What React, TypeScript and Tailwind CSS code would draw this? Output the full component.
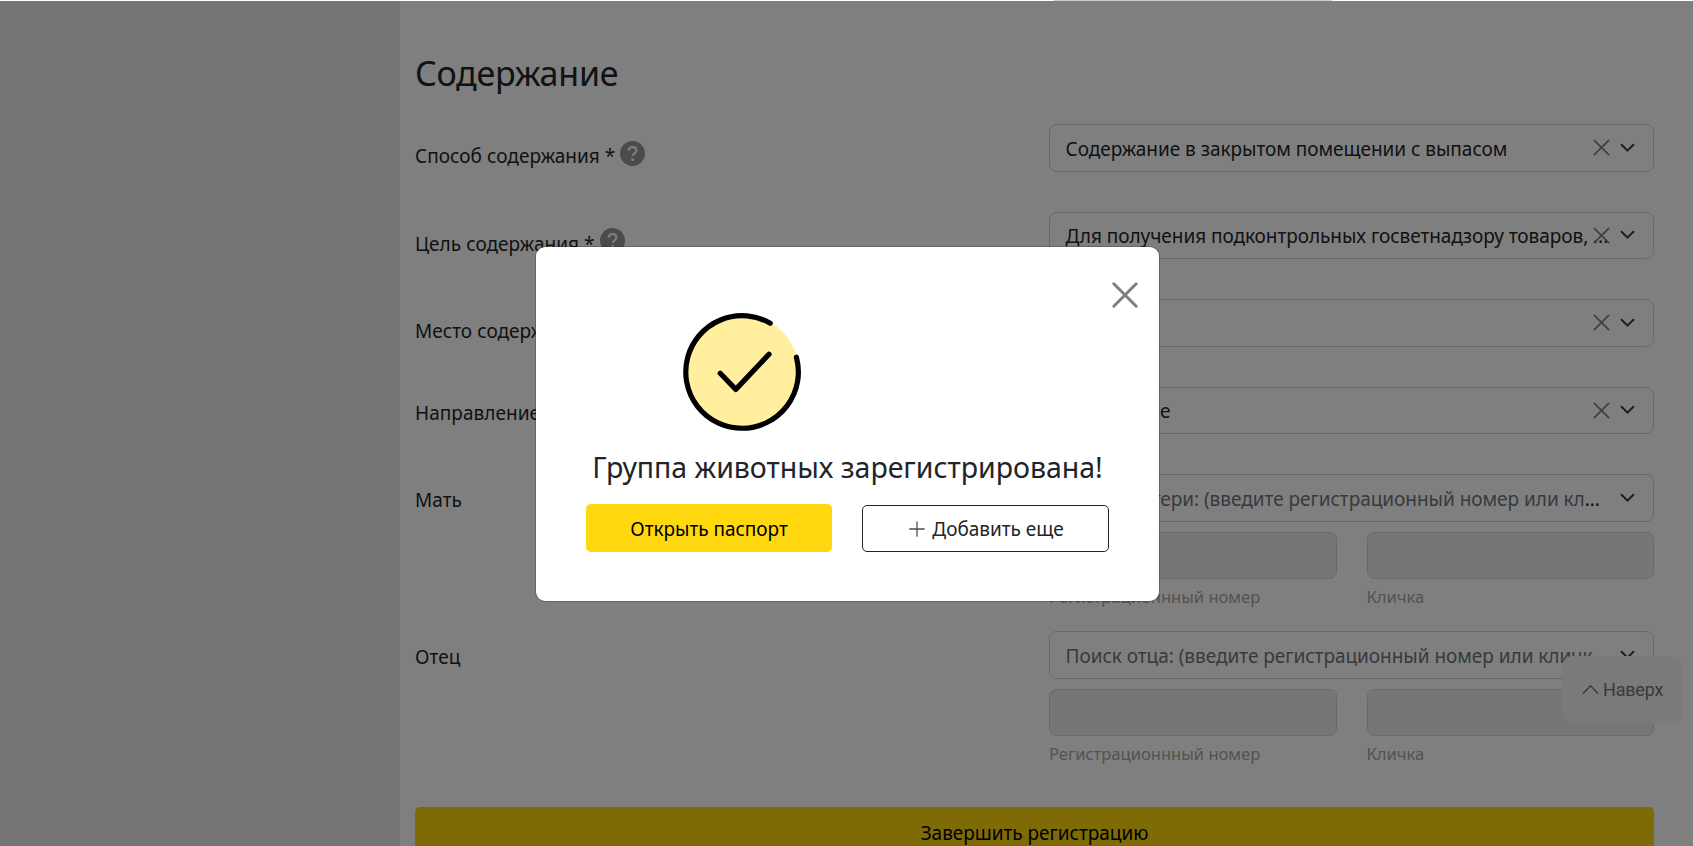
import React from "react";
import type { ReactNode } from "react";

function HelpIcon() {
  return (
    <svg viewBox="0 0 25 25" className="-mt-[6px] ml-[5px] h-[25px] w-[25px]" fill="none">
      <circle cx="12.5" cy="12.5" r="12.5" fill="#969696" />
      <path d="M8.7 9.6C8.8 7.4 10.4 6.2 12.5 6.2c2.2 0 3.9 1.3 3.9 3.3 0 2.7-3.6 2.9-3.6 5.5" stroke="#f8f8f8" strokeWidth="2.2" />
      <circle cx="12.7" cy="18.4" r="1.5" fill="#f8f8f8" />
    </svg>
  );
}

function Label({ children, help, className }: { children: ReactNode; help?: boolean; className: string }) {
  return (
    <div className={`flex w-[634px] shrink-0 items-center leading-[30px] tracking-[0.04px] ${className}`}>
      <span className="whitespace-pre">{children}</span>
      {help && <HelpIcon />}
    </div>
  );
}

function Select({ children, clearable, muted }: { children?: ReactNode; clearable?: boolean; muted?: boolean }) {
  return (
    <div className="relative h-[47.5px] rounded-[7.5px] border border-[#ced4da] pl-[15.5px] pt-[8.5px]">
      <div className={`h-[30px] whitespace-nowrap leading-[30px] ${muted ? "text-[#6c757d]" : "text-[#212529]"}`}>
        {children}
      </div>
      {clearable && (
        <svg className="absolute right-[43px] top-[14px] h-[17px] w-[17px]" viewBox="0 0 17 17" fill="none" stroke="#808080" strokeWidth="1.7" strokeLinecap="round">
          <path d="M1.3 1.3 15.7 15.7M15.7 1.3 1.3 15.7" />
        </svg>
      )}
      <svg className="absolute right-[18px] top-[17.5px] h-[10px] w-[15px]" viewBox="0 0 15 10" fill="none" stroke="#343a40" strokeWidth="2" strokeLinecap="round" strokeLinejoin="round">
        <path d="M1.6 1.8 7.5 7.6 13.4 1.8" />
      </svg>
    </div>
  );
}

function Disabled({ label }: { label: string }) {
  return (
    <div className="flex-1">
      <div className="h-[47.5px] rounded-[7.5px] border border-[#ced4da] bg-[#e9ecef]" />
      <div className="mt-[4.6px] h-[26px] whitespace-nowrap text-[16.6px] leading-[26px] text-[#a6a6a6]">{label}</div>
    </div>
  );
}

function ParentFields() {
  return (
    <div className="mt-[10px] flex gap-[30px]">
      <Disabled label="Регистрационнный номер" />
      <Disabled label="Кличка" />
    </div>
  );
}

function Row({ label, children, className }: { label: ReactNode; children: ReactNode; className: string }) {
  return (
    <div className={`flex ${className}`}>
      {label}
      <div className="w-[605px] shrink-0">{children}</div>
    </div>
  );
}

function SuccessIcon() {
  return (
    <svg className="ml-[146px] mt-[65px] h-[120px] w-[120px]" viewBox="0 0 120 120" fill="none">
      <circle cx="60" cy="60" r="57" fill="#ffef9f" />
      <path d="M88.2 11.2A56.3 56.3 0 1 0 114.4 45.2" stroke="#000" strokeWidth="5.2" strokeLinecap="round" />
      <path d="M38.2 61.3 53.8 77.4 87 42.2" stroke="#000" strokeWidth="5.2" strokeLinecap="round" strokeLinejoin="round" />
    </svg>
  );
}

export default function App() {
  return (
    <div className="relative h-[846px] w-[1693px] overflow-hidden bg-white font-['Noto_Sans',sans-serif] text-[19px] tracking-[-0.03px] text-[#212529]">
      <div className="flex h-full">
        <aside className="mt-px w-[400px] shrink-0 bg-[#ebebeb]" />
        <main className="w-[1293px] pl-[15px]">
          <div className="ml-[639px] h-px w-[278px] bg-[#c8ced4]" />
          <h1 className="mt-[47.4px] h-[76px] text-[34px] leading-[50px] tracking-[-0.25px]">Содержание</h1>
          <Row className="h-[87.5px]" label={<Label help className="mt-[17px] h-[30px]">Способ содержания *</Label>}>
            <Select clearable>Содержание в закрытом помещении с выпасом</Select>
          </Row>
          <Row className="h-[87.5px]" label={<Label help className="mt-[17px] h-[30px]">Цель содержания *</Label>}>
            <Select clearable>
              <span className="tracking-[-0.05px]">Для получения подконтрольных госветнадзору товаров, ...</span>
            </Select>
          </Row>
          <Row className="h-[87.5px]" label={<Label className="mt-[17px] h-[30px]">Место содержания *</Label>}>
            <Select clearable />
          </Row>
          <Row className="h-[87.5px]" label={<Label className="mt-[11px] h-[30px]">Направление</Label>}>
            <Select clearable>
              <span className="tracking-[-0.3px]">Разведение</span>
            </Select>
          </Row>
          <Row className="h-[156.8px]" label={<Label className="mt-[11px] h-[30px]">Мать</Label>}>
            <Select muted>
              Поиск матери: (введите регистрационный номер или кл<span className="text-[#212529]">...</span>
            </Select>
            <ParentFields />
          </Row>
          <Row className="h-[176px]" label={<Label className="mt-[10.5px] h-[30px]">Отец</Label>}>
            <Select muted>Поиск отца: (введите регистрационный номер или кличк</Select>
            <ParentFields />
          </Row>
          <button className="flex h-[50px] w-[1239px] justify-center rounded-[5px] bg-[#ffd60a] pt-[10.5px] leading-[30px] text-black">
            Завершить регистрацию
          </button>
        </main>
      </div>

      <button className="absolute left-[1562px] top-[656px] flex h-[67px] w-[120px] items-center rounded-[10px] bg-[#f4f4f4] pl-[20px] font-['Roboto',sans-serif] text-[18px] text-[#6c757d]">
        <svg className="mr-[4px] h-[11px] w-[17px]" viewBox="0 0 17 11" fill="none" stroke="currentColor" strokeWidth="1.3" strokeLinecap="round" strokeLinejoin="round">
          <path d="M1.3 9.2 8.5 1.8 15.7 9.2" />
        </svg>
        <span className="tracking-[-0.2px]">Наверх</span>
      </button>

      <div className="absolute inset-x-0 bottom-0 top-px bg-black/50" />

      <div role="dialog" className="absolute left-[535px] top-[246px] flex h-[356px] w-[625px] flex-col rounded-[10px] border border-black/20 bg-white bg-clip-padding">
        <button className="absolute right-[20.5px] top-[33.5px]" aria-label="Закрыть">
          <svg className="h-[28px] w-[28px]" viewBox="0 0 28 28" fill="none" stroke="#7f7f7f" strokeWidth="3" strokeLinecap="round">
            <path d="M2.8 2.8 25.2 25.2M25.2 2.8 2.8 25.2" />
          </svg>
        </button>
        <SuccessIcon />
        <h2 className="mt-[17px] h-[36px] text-center text-[28.5px] leading-[36px]">Группа животных зарегистрирована!</h2>
        <div className="mt-[19px] flex gap-[30px] pl-[50px]">
          <button className="flex h-[48px] w-[246px] justify-center rounded-[5px] bg-[#ffd80f] pt-[9.5px] leading-[30px] text-black">
            Открыть паспорт
          </button>
          <button className="mt-px flex h-[47px] w-[247px] justify-center rounded-[5px] border border-[#212529] pl-[2px] pt-[7.5px] leading-[30px]">
            <svg className="mr-[7px] mt-[7px] h-[16px] w-[16px]" viewBox="0 0 16 16" stroke="#4a4d50" strokeWidth="1.3" strokeLinecap="round">
              <path d="M8 .8v14.4M.8 8h14.4" />
            </svg>
            Добавить еще
          </button>
        </div>
      </div>
    </div>
  );
}
